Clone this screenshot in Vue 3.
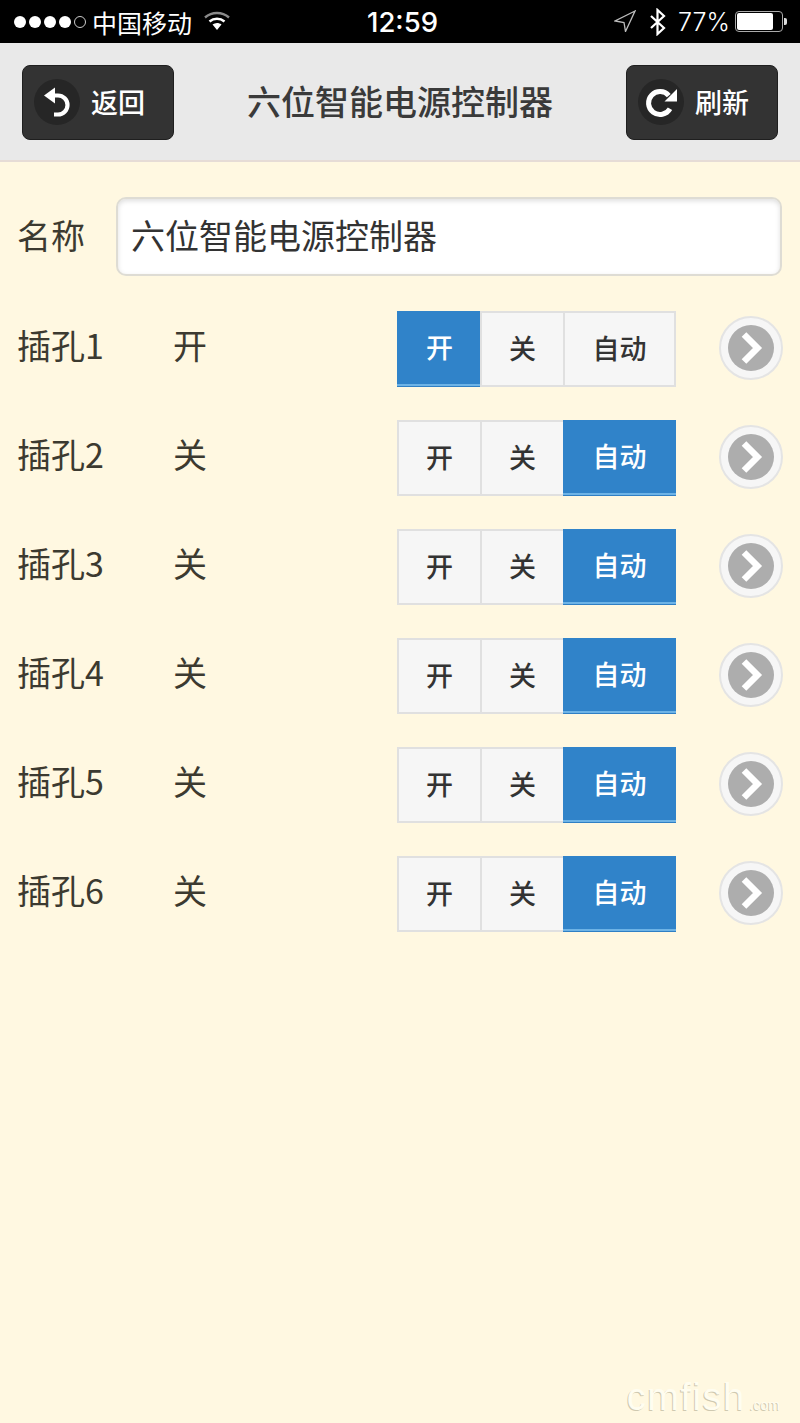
<script setup>
const rows = [
  { name: '插孔1', state: '开', active: 0 },
  { name: '插孔2', state: '关', active: 2 },
  { name: '插孔3', state: '关', active: 2 },
  { name: '插孔4', state: '关', active: 2 },
  { name: '插孔5', state: '关', active: 2 },
  { name: '插孔6', state: '关', active: 2 },
]
const modes = ['开', '关', '自动']
</script>

<template>
  <div class="page">
    <div class="status">
      <div class="st-left">
        <div class="dots">
          <i v-for="n in 4" :key="n" class="dot"></i>
          <i class="dot hollow"></i>
        </div>
        <span class="carrier">中国移动</span>
        <svg class="wifi" width="26" height="20" viewBox="0 0 26 20">
          <path d="M1 6.500C8 .5 18 .5 25 6.500" fill="none" stroke="#8a8a8a" stroke-width="2.400"/>
          <path d="M5.500 10.500c4.500-3.600 10.500-3.600 15 0" fill="none" stroke="#fff" stroke-width="2.600"/>
          <path d="M8.500 13.500c2.800-2 6.200-2 9 0L13 19z" fill="#fff"/>
        </svg>
      </div>
      <div class="time">12:59</div>
      <div class="st-right">
        <svg class="loc" width="22" height="22" viewBox="0 0 22 22">
          <path d="M21 1 1 11l9 1.500 1.500 9z" fill="none" stroke="#bdbdbd" stroke-width="1.300"/>
        </svg>
        <svg class="bt" width="18" height="28" viewBox="0 0 18 28">
          <path d="M2 8 15 20 8.500 26V2L15 8 2 20" fill="none" stroke="#fff" stroke-width="2.200"/>
        </svg>
        <span class="pct">77%</span>
        <div class="battery"><div class="level"></div></div>
        <div class="nub"></div>
      </div>
    </div>

    <header class="bar">
      <button class="hbtn">
        <span class="hicon">
          <svg width="46" height="46" viewBox="0 0 46 46">
            <path d="M10 16.500 21 8.500v16z" fill="#fff"/>
            <path d="M19 16.500h5a9.500 9.500 0 0 1 0 19h-4" fill="none" stroke="#fff" stroke-width="4.200"/>
          </svg>
        </span>
        <span class="htext">返回</span>
      </button>
      <h1 class="title">六位智能电源控制器</h1>
      <button class="hbtn">
        <span class="hicon">
          <svg width="46" height="46" viewBox="0 0 46 46">
            <path d="M30.800 16.600A11.500 11.500 0 1 0 32 29.800" fill="none" stroke="#fff" stroke-width="5"/>
            <path d="M39 10v12.500H26.500z" fill="#fff"/>
          </svg>
        </span>
        <span class="htext">刷新</span>
      </button>
    </header>

    <main class="content">
      <div class="name-row">
        <label class="name-label">名称</label>
        <div class="input"><span>六位智能电源控制器</span></div>
      </div>

      <div v-for="row in rows" :key="row.name" class="row">
        <span class="r-name">{{ row.name }}</span>
        <span class="r-state">{{ row.state }}</span>
        <div class="seg">
          <div
            v-for="(m, i) in modes"
            :key="m"
            class="seg-btn"
            :class="{ active: row.active === i, wide: i === 2 }"
          >{{ m }}</div>
        </div>
        <svg class="go" width="64" height="64" viewBox="0 0 64 64">
          <circle cx="32" cy="32" r="31" fill="#f6f6f6" stroke="#e4e4e4" stroke-width="2"/>
          <circle cx="32" cy="32" r="23" fill="#adadad"/>
          <path d="M25 18.500 38.500 32 25 45.500" fill="none" stroke="#fff" stroke-width="6.500"/>
        </svg>
      </div>
    </main>

    <div class="mark">cmfish<small>.com</small></div>
  </div>
</template>

<style>
html, body { margin: 0; padding: 0; background: #fff8e1; }
</style>

<style scoped>
.page {
  position: relative;
  width: 800px;
  height: 1423px;
  overflow: hidden;
  display: flex;
  flex-direction: column;
  background: #fff8e1;
  font-family: "Noto Sans CJK SC", "Liberation Sans", sans-serif;
  color: #333;
}
.status {
  height: 43px;
  background: #000;
  color: #fff;
  display: grid;
  grid-template-columns: 1fr auto 1fr;
  align-items: center;
  padding: 0 13px 0 14px;
  box-sizing: border-box;
  flex: none;
}
.st-left, .st-right { display: flex; align-items: center; }
.st-right { justify-content: flex-end; }
.dots { display: flex; gap: 3px; }
.dot { width: 12px; height: 12px; border-radius: 50%; background: #fff; box-sizing: border-box; }
.dot.hollow { background: none; border: 1px solid #ccc; }
.carrier { margin-left: 6px; font-size: 25px; line-height: 42px; }
.wifi { margin-left: 12px; margin-top: -2px; }
.time { font-family: Inter, "Liberation Sans", sans-serif; font-size: 27.5px; font-weight: 500; margin-left: 4px; }
.loc { margin-right: 11px; margin-top: -1px; }
.bt { margin-right: 11px; margin-left: 2px; }
.pct { font-family: Inter, "Liberation Sans", sans-serif; font-size: 25px; font-weight: 300; margin-right: 5px; }
.battery {
  width: 48px; height: 21px; box-sizing: border-box;
  border: 1px solid #aaa; border-radius: 4px; padding: 1px;
}
.level { width: 36px; height: 100%; background: #fff; border-radius: 2px; }
.nub { width: 3px; height: 7px; background: #ddd; border-radius: 0 2px 2px 0; margin-left: 1px; }

.bar {
  height: 119px;
  flex: none;
  box-sizing: border-box;
  background: #e9e9e9;
  border-bottom: 2px solid #e6dcd6;
  display: flex;
  align-items: center;
  justify-content: space-between;
  padding: 1px 22px 0;
}
.hbtn {
  width: 152px;
  height: 75px;
  box-sizing: border-box;
  background: #333;
  border: 1px solid #1f1f1f;
  border-radius: 8px;
  padding: 0 0 0 11px;
  display: flex;
  align-items: center;
  color: #fff;
  font-family: inherit;
}
.hicon {
  width: 46px; height: 46px; border-radius: 50%;
  background: #262626; display: block; flex: none;
}
.hicon svg { display: block; }
.htext { margin-left: 11px; font-size: 27px; font-weight: 500; line-height: 1; padding-bottom: 2px; }
.title { margin: 0; font-size: 34px; font-weight: 500; color: #3a3a3a; line-height: 1; padding-bottom: 3px; }

.content {
  flex: 1;
  padding: 35px 18px 0;
  display: flex;
  flex-direction: column;
}
.name-row { display: flex; align-items: center; height: 79px; margin-bottom: 35px; }
.name-label { width: 98px; flex: none; font-size: 34px; color: #3c3a30; margin-left: -1px; padding-right: 1px; padding-bottom: 4px; }
.input {
  flex: 1;
  height: 79px;
  box-sizing: border-box;
  background: #fff;
  border: 2px solid #dedcd4;
  border-radius: 10px;
  box-shadow: inset 0 2px 5px rgba(0, 0, 0, .13);
  font-size: 34px;
  color: #333;
  padding: 0 0 4px 13px;
  display: flex;
  align-items: center;
}
.row { display: flex; align-items: center; height: 76px; margin-bottom: 33px; }
.r-name { width: 156px; flex: none; font-size: 34px; color: #3c3a30; margin-left: -1px; padding-right: 1px; padding-bottom: 9px; }
.r-state { width: 223px; flex: none; font-size: 34px; color: #3c3a30; padding-bottom: 9px; margin-left: -1px; padding-right: 1px; }
.seg { display: flex; width: 279px; height: 76px; flex: none; }
.seg-btn {
  width: 85px;
  flex: none;
  box-sizing: border-box;
  margin-right: -2px;
  background: #f6f6f6;
  border: 2px solid #e0e0e0;
  display: flex;
  align-items: center;
  justify-content: center;
  font-size: 27px;
  font-weight: 500;
  color: #333;
  padding-bottom: 4px;
}
.seg-btn.wide { width: 113px; margin-right: 0; }
.seg-btn.active {
  background: #3083c9;
  border: 0;
  box-shadow: inset 0 -2px 0 #6db3e6, inset 0 -3px 0 #3083c9;
  color: #fff;
  border-bottom: 1px solid #2f7fc4;
}
.go { margin-left: 43px; flex: none; margin-top: -2px; }

.mark {
  position: absolute;
  right: 20px;
  bottom: 7px;
  font-family: "Liberation Sans", sans-serif;
  font-size: 38px;
  letter-spacing: 1.5px;
  line-height: 1;
  color: #fffdf0;
  text-shadow: -1px 1px 0 #cfc9b0;
}
.mark small { font-size: 14px; margin-left: 4px; letter-spacing: 0; }
</style>
